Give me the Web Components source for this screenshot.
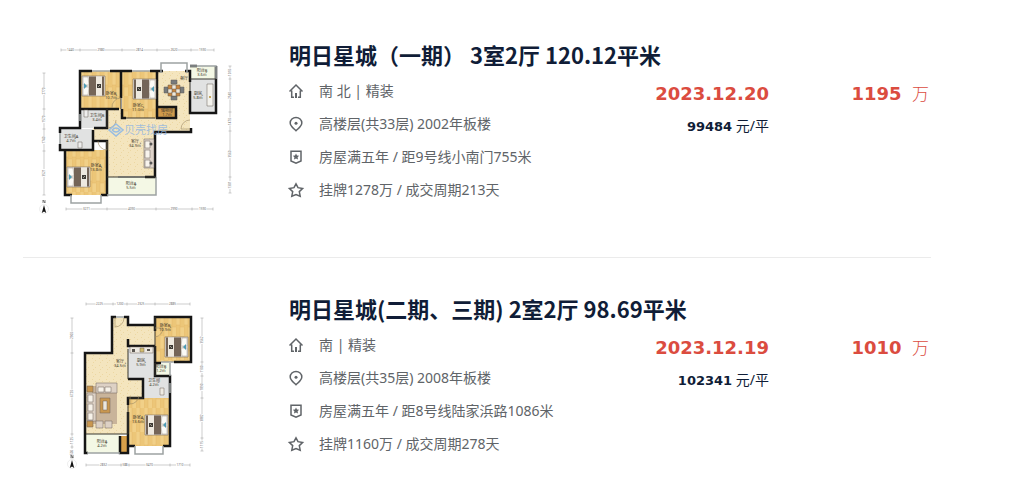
<!DOCTYPE html>
<html lang="zh-CN">
<head>
<meta charset="utf-8">
<title>明日星城 成交</title>
<style>
  body {
    margin: 0;
    background: #fff;
    color: #101d37;
    font: 14px/20px "Noto Sans", "Noto Sans CJK SC", sans-serif;
  }
</style>
</head>
<body>
<deal-list>
  <deal-card href="#deal-1" date="2023.12.20" unit="99484" total="1195">
    <floor-plan slot="plan" name="three-room"></floor-plan>
    <span slot="title">明日星城（一期） 3室2厅 120.12平米</span>
    <deal-info icon="house">南 北 | 精装</deal-info>
    <deal-info icon="position">高楼层(共33层) 2002年板楼</deal-info>
    <deal-info icon="tag">房屋满五年 / 距9号线小南门755米</deal-info>
    <deal-info icon="star">挂牌1278万 / 成交周期213天</deal-info>
  </deal-card>
  <deal-card href="#deal-2" date="2023.12.19" unit="102341" total="1010">
    <floor-plan slot="plan" name="two-room"></floor-plan>
    <span slot="title">明日星城(二期、三期) 2室2厅 98.69平米</span>
    <deal-info icon="house">南 | 精装</deal-info>
    <deal-info icon="position">高楼层(共35层) 2008年板楼</deal-info>
    <deal-info icon="tag">房屋满五年 / 距8号线陆家浜路1086米</deal-info>
    <deal-info icon="star">挂牌1160万 / 成交周期278天</deal-info>
  </deal-card>
</deal-list>

<script>
class DealList extends HTMLElement {
  constructor() {
    super();
    this.attachShadow({ mode: 'open' });
  }

  static get styles() {
    return /* css */ `
      :host {
        display: block;
        padding: 4px 80px 0 23px;
      }

      ::slotted(:not(:last-child)) {
        padding-bottom: 37px;
        border-bottom: 1px solid #ebebeb;
      }
    `;
  }

  connectedCallback() {
    this.shadowRoot.innerHTML = /* html */ `
      <style>${DealList.styles}</style>
      <slot></slot>
    `;
  }
}

class DealCard extends HTMLElement {
  constructor() {
    super();
    this.attachShadow({ mode: 'open' });
  }

  static get styles() {
    return /* css */ `
      :host {
        display: flex;
        gap: 56px;
        padding-top: 31px;
      }

      .content {
        flex: 1;
        padding-top: 4px;
      }

      h2 {
        margin: 0 0 5px;
        font-family: "Noto Sans CJK SC", sans-serif;
        font-size: 22px;
        line-height: 30px;
        font-weight: 700;
      }

      a {
        color: inherit;
        text-decoration: none;
      }

      .body {
        display: flex;
      }

      .details {
        flex: 1;
      }

      .deal {
        text-align: right;
      }

      .date, .total {
        color: #db4c3f;
        line-height: 32px;
        padding-top: 4px;
      }

      .date, .number {
        font-family: "DejaVu Sans", "Noto Sans CJK SC", sans-serif;
        font-size: 18px;
        font-weight: 700;
      }

      .unit {
        line-height: 32px;
      }

      .unit b {
        font-family: "DejaVu Sans", sans-serif;
        font-size: 13px;
      }

      .total {
        box-sizing: border-box;
        width: 162px;
        padding-right: 2px;
        text-align: right;
        font-size: 17px;
        font-weight: 300;
      }

      .number {
        margin-right: 6px;
      }
    `;
  }

  connectedCallback() {
    const attr = name => this.getAttribute(name);
    this.shadowRoot.innerHTML = /* html */ `
      <style>${DealCard.styles}</style>
      <a href="${attr('href')}" aria-label="户型图"><slot name="plan"></slot></a>
      <div class="content">
        <h2><a href="${attr('href')}"><slot name="title"></slot></a></h2>
        <div class="body">
          <div class="details"><slot></slot></div>
          <div class="deal">
            <div class="date">${attr('date')}</div>
            <div class="unit"><b>${attr('unit')}</b> 元/平</div>
          </div>
          <div class="total"><span class="number">${attr('total')}</span> 万</div>
        </div>
      </div>
    `;
  }
}

const icons = {
  house: `<path d="M.5 7.500 7 1 13.500 7.500M2.700 6.500V13.200H5M11.300 6.500V13.200H9"/><path d="M7 9V14" stroke-width="2"/>`,
  position: `<path d="M7 13.700C4 10.800 1.200 8.900 1.200 5.900a5.800 5.500 0 0 1 11.600 0C12.800 8.900 10 10.800 7 13.700Z"/><circle cx="7" cy="6.200" r="1.500" fill="currentColor" stroke="none"/>`,
  tag: `<path d="M2 1.200H12V11L7 13.200 2 11Z"/><path d="m7 3.500 1 2 2.200.3-1.600 1.500.4 2.200L7 8.500 5 9.500l.4-2.200L3.800 5.800l2.200-.3Z" fill="currentColor" stroke="none"/>`,
  star: `<path d="m7 .8 2 3.900 4.600.8-3.300 3.100.9 4.600L7 11.600 2.800 13.200l.9-4.600L.4 5.500 5 4.700Z"/>`
};

class DealInfo extends HTMLElement {
  constructor() {
    super();
    this.attachShadow({ mode: 'open' });
  }

  static get styles() {
    return /* css */ `
      :host {
        display: flex;
        align-items: center;
        gap: 16px;
        height: 33px;
        color: #606468;
      }

      svg {
        width: 14px;
        height: 14px;
        overflow: visible;
        fill: none;
        stroke: currentColor;
        stroke-width: 1.5;
      }
    `;
  }

  connectedCallback() {
    this.shadowRoot.innerHTML = /* html */ `
      <style>${DealInfo.styles}</style>
      <svg viewBox="0 0 14 14" aria-hidden="true">${icons[this.getAttribute('icon')]}</svg>
      <span><slot></slot></span>
    `;
  }
}

// bed with the pillows on the left, 23 x 20
const bed = (x, y, flip = 1) => `
  <g transform="translate(${x} ${y}) scale(${flip} 1)">
    <path fill="#e9e5df" stroke="#75695f" stroke-width=".6" d="M0 0H23V20H0Z"/>
    <path fill="#fbfaf6" stroke="#a49a8f" stroke-width=".5" d="M1 1H6L7 9H1ZM1 11H7L6 19H1Z"/>
    <path fill="#4d9bb5" d="m2 7 3 3-3 3Z"/>
    <path fill="#746558" d="M7 .5H14V19.500H7ZM20 .5H22V19.500H20Z"/>
    <path fill="#eee9df" d="M14 .5H20V19.500H14Z"/>
    <path fill="#3e3b36" d="M15 8H19V12H15Z"/><path stroke="#c9c5b6" stroke-width=".7" d="m16 11 2-2"/>
  </g>`;

const label = (x, y, name, size) => `
  <text x="${x}" y="${y}">${name}</text><text x="${x}" y="${y + 4}">${size}</text>`;

// dimension line: ticks along one axis with a figure between each pair
const ruler = (axis, at, stops, figures) => {
  const spot = (v, across = 0) => axis === 'x' ? [v, at + across] : [at + across, v];
  const lines = stops.slice(1).map((end, i) => {
    const start = stops[i];
    const mid = (start + end) / 2;
    const hole = Math.min(4, (end - start) / 3);
    const turn = axis === 'y' ? ` transform="rotate(-90 ${at} ${mid})"` : '';
    const [tx, ty] = spot(mid);
    return `<path d="M${spot(start)}L${spot(mid - hole)}M${spot(mid + hole)}L${spot(end)}"/>
      <text x="${tx}" y="${ty + 1.3}"${turn}>${figures[i]}</text>`;
  });
  const ticks = stops.map(v => `<path d="M${spot(v, -1.5)}L${spot(v, 1.5)}"/>`);
  return `<g class="ruler">${lines.join('')}${ticks.join('')}</g>`;
};

const compass = (x, y) => `
  <g transform="translate(${x} ${y})">
    <circle r="4.500" fill="#fff" stroke="#ddd" stroke-width=".5"/>
    <path fill="#111" d="M0-4 2.200 4 0 2.500-2.200 4Z"/>
    <path stroke="#333" stroke-width=".6" d="M-1-6V-9L1-6V-9"/>
  </g>`;

const plans = {
  'three-room': {
    box: '23 35 210 185',
    art: `
      <path fill="url(#stone)" d="M157 71H190V132H156V177H107V141H93V128H107V109H122V118H157Z"/>
      <path fill="url(#wood)" d="M80 71H121V109H80ZM122 71H157V118H122ZM65 150H107V195H65Z"/>
      <path fill="#cf9a4c" d="M158 107H176V118H158Z"/>
      <path fill="#e1e2e2" d="M80 109H107V128H80ZM60 129H93V150H60ZM190 79H216V112H190Z"/>
      <path fill="#f4f8e5" d="M190 66H216V79H190ZM107 177H156V195H107Z"/>
      <path class="wall" d="M92 71H80V109H107V128H94M110 71H132M121 71V98M122 109V118H126M150 71H163M157 71V107M108 109H119M80 109V128H60V133M60 144V150H93V130M65 150V195H72M101 195H107V141H93M107 152V195M157 107H176V118H157V107M185 71H190V82M190 91V113H216V66M190 66H197M191 132H155V177H145M180 132H191V128"/>
      <path class="window" d="M92 71H110M132 71H150M161 73V63H187V73M190 66H216V79M60 133V144M80 114V121M71 195V203H101V195M107 195H156V177M118 177H145"/>
      <path class="inner" d="M121 98V109M107 109V128M107 177H156M190 79H216M126 118H155M190 82V91"/>
      <path class="door" d="M121 98A9 9 0 0 0 112 108M107 141V150A9 9 0 0 1 98 141M190 120A9 9 0 0 0 181 129H190M108 128A8 8 0 0 0 116 120"/>
      ${bed(82, 76)}${bed(156, 79, -1)}${bed(67, 167)}
      <g stroke="#655e55" stroke-width=".5">
        <path fill="#777b7c" d="M171 80H177V84H171ZM171 96H177V100H171ZM164 87H168V93H164ZM180 87H184V93H180Z"/>
        <path fill="#c7853e" d="M168 85H180V96H168Z"/>
        <path fill="#eee7d8" d="M172 85H176V89H172ZM168 89H172V93H168ZM176 89H180V93H176ZM172 92H176V96H172Z"/>
        <path fill="#ded3ca" d="M144 139H154V168H144Z"/>
        <path fill="#f8f4ed" d="M145 141H150V148H145ZM145 150H150V158H145ZM145 160H150V167H145Z"/>
        <path fill="#f3f2ed" d="M207 84H213V106H207Z"/>
        <path fill="#eee" d="M84 110H88V117H84ZM78 142H82V148H78Z"/>
      </g>
      <circle cx="210" cy="97" r="1" fill="#b78f32"/><circle cx="151" cy="144" r="1.500" fill="#555"/><circle cx="151" cy="163" r="1.500" fill="#555"/>
      ${label(111, 95, '卧室B', '10.7㎡')}${label(138, 107, '卧室C', '11.0㎡')}
      ${label(97, 117, '卫生间B', '3.4㎡')}${label(71, 138, '卫生间A', '4.7㎡')}
      ${label(96, 167, '卧室A', '13.8㎡')}${label(135, 143, '客厅', '34.9㎡')}
      ${label(131, 185, '阳台A', '5.5㎡')}${label(202, 72, '阳台B', '3.6㎡')}
      ${label(198, 95, '厨房', '5.8㎡')}${label(167, 112, '储物间', '1.7㎡')}
      <text x="184" y="80">餐厅</text>
      <g class="watermark">
        <path d="m109 130 7-6 7 6-7 6ZM112 130q4-4 8 0-4 4-8 0"/>
        <text x="146" y="134">贝壳找房</text>
      </g>
      ${ruler('x', 50, [61, 80, 122, 157, 191, 214], ['1440', '2980', '2814', '2620', '1590'])}
      ${ruler('y', 44, [73, 109, 129, 151, 195], ['2770', '1570', '1740', '3521'])}
      ${ruler('x', 209, [66, 107, 156, 192, 213], ['3271', '4090', '2990', '1590'])}
      ${ruler('y', 230, [66, 79, 112, 131, 177, 193], ['1010', '2540', '1470', '3560', '1301'])}
      ${compass(44, 209)}
    `
  },
  'two-room': {
    box: '23 289 210 185',
    art: `
      <path fill="url(#stone)" d="M112 318H128V325H155V346H128V380H143V398H128V434H86V353H112Z"/>
      <path fill="url(#wood)" d="M155 317H191V362H155ZM128 398H170V446H128Z"/>
      <path fill="#e1e2e2" d="M128 346H155V379H128ZM143 376H170V398H143Z"/>
      <path fill="#f4f8e5" d="M155 363H170V376H155ZM86 434H120V453H86Z"/>
      <path fill="#d8a04a" d="M120 436H129V453H120Z"/>
      <path class="wall" d="M116 317H112V353H85V453H88M124 317H128V325H155V317H191V362H174M155 325V331M155 346H128V339M155 346V376H170V398M128 379H143V398H128V405M128 412V446H135M163 446H170V398M128 446V453H120V436M155 363H161"/>
      <path class="window" d="M116 317H124M161 362H174M135 446V454H163V446M170 363V376M170 383V393M87 453H120"/>
      <path class="inner" d="M86 434H128M128 349V379M155 317V362M155 363V376M128 398H143M128 405V434"/>
      <path class="door" d="M115 317V327A9 9 0 0 0 124 318M155 337A9 9 0 0 0 163 328H155M130 396V404A9 9 0 0 0 139 396"/>
      ${bed(188, 337, -1)}${bed(168, 415, -1)}
      <path fill="#c9b49a" d="M92 386H117V424H92Z"/>
      <g stroke="#6c625a" stroke-width=".5">
        <path fill="#ddd1c5" d="M96 383H117V393H96ZM87 393H96V421H87ZM96 421H103V428H96ZM105 421H112V428H105Z"/>
        <path fill="#f7f2e9" d="M98 387H104V392H98ZM105 387H111V392H105ZM88 395H93V402H88ZM88 404H93V411H88ZM88 413H93V420H88Z"/>
        <path fill="#c9974f" d="M100 398H110V413H100ZM87 386H93V392H87ZM87 421H93V427H87Z"/>
        <path fill="#ece8df" d="M103 401H107V410H103Z"/>
        <path fill="#eeeae2" d="M130 347H153V353H130ZM160 388H164V395H160Z"/>
        <path fill="#d3be6e" d="M140 348H144V352H140Z"/>
      </g>
      <path fill="#5b5751" d="M132 349H135V352H132ZM147 349H150V351H147Z"/>
      ${label(165, 327, '卧室B', '10.9㎡')}${label(120, 363, '客厅', '34.5㎡')}
      ${label(141, 362, '厨房', '5.9㎡')}${label(161, 368, '阳台B', '1.2㎡')}
      ${label(154, 382, '卫生间', '4.2㎡')}${label(138, 419, '卧室A', '13.6㎡')}
      ${label(102, 443, '阳台A', '4.2㎡')}
      ${ruler('x', 304, [86, 113, 127, 155, 190], ['2225', '1200', '2325', '2885'])}
      ${ruler('y', 72, [318, 353, 434, 447, 458], ['2900', '6720', '1125', '500'])}
      ${ruler('x', 465, [86, 121, 129, 170, 190], ['2832', '588', '3470', '1710'])}
      ${ruler('y', 202, [318, 362, 376, 398, 438, 451], ['3562', '1100', '1890', '3882', '1115'])}
      ${compass(72, 464)}
    `
  }
};

class FloorPlan extends HTMLElement {
  constructor() {
    super();
    this.attachShadow({ mode: 'open' });
  }

  static get styles() {
    return /* css */ `
      :host {
        display: block;
        width: 210px;
      }

      svg {
        display: block;
        width: 100%;
        fill: none;
      }

      text {
        fill: #40392b;
        font-size: 4px;
        text-anchor: middle;
      }

      .wall {
        stroke: #151515;
        stroke-width: 2.5;
      }

      .window {
        stroke: #9da2a2;
        stroke-width: 1.5;
      }

      .inner {
        stroke: #383630;
        stroke-width: 1;
      }

      .door {
        stroke: #9e8963;
        stroke-width: .6;
      }

      .ruler path {
        stroke: #999;
        stroke-width: .5;
      }

      .ruler text {
        fill: #666;
        font-size: 3px;
      }

      .watermark path {
        stroke: #99bde2;
        stroke-width: 1.5;
      }

      .watermark text {
        fill: #8db4e2;
        fill-opacity: .8;
        font-size: 11px;
      }
    `;
  }

  connectedCallback() {
    const { box, art } = plans[this.getAttribute('name')];
    this.shadowRoot.innerHTML = /* html */ `
      <style>${FloorPlan.styles}</style>
      <svg viewBox="${box}" role="img" aria-label="户型图">
        <defs>
          <pattern id="wood" width="8" height="24" patternUnits="userSpaceOnUse">
            <path fill="#ecc678" d="M0 0H8V24H0Z"/>
            <path fill="#f1d088" d="M0 0H4V13H0ZM4 15H8V24H4Z"/>
            <path stroke="#e0b462" stroke-width=".4" d="M0 0V24M4 0V24M0 13H4M4 15H8"/>
          </pattern>
          <pattern id="stone" width="7" height="7" patternUnits="userSpaceOnUse">
            <path fill="#f4e5be" d="M0 0H7V7H0Z"/>
            <path fill="#ecd7a2" d="M1 1H2V2H1ZM4 3H5V4H4ZM2 5H3V6H2Z"/>
          </pattern>
        </defs>
        ${art}
      </svg>
    `;
  }
}

customElements.define('deal-list', DealList);
customElements.define('deal-card', DealCard);
customElements.define('deal-info', DealInfo);
customElements.define('floor-plan', FloorPlan);
</script>
</body>
</html>
